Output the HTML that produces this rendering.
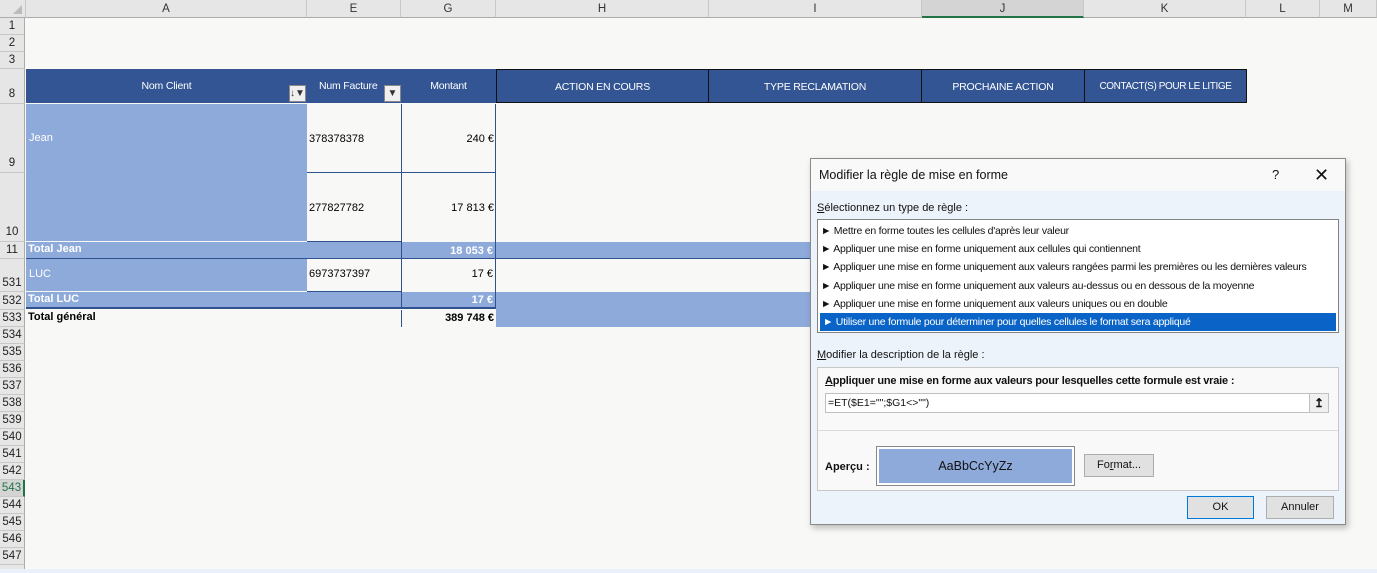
<!DOCTYPE html>
<html><head><meta charset="utf-8"><style>
*{margin:0;padding:0;box-sizing:border-box}
body{width:1377px;height:573px;overflow:hidden;background:#f8f8f6;font-family:"Liberation Sans",sans-serif;font-size:11px;color:#000;position:relative}
.a{position:absolute}
.ch{top:0;height:18px;background:#e6e6e6;border-right:1px solid #c8c8c8;border-bottom:1px solid #ababab;text-align:center;line-height:18px;font-size:11.5px;color:#333}
.rh{left:0;width:25px;background:#e6e6e6;border-bottom:1px solid #c8c8c8;border-right:1px solid #ababab;text-align:center;font-size:11.5px;color:#222}
.hd{top:69px;height:34px;background:#335593;color:#fff;text-align:center;line-height:34px;font-size:10.5px;letter-spacing:-0.2px}
.lb{background:#8eaadb}
.dlg{font-size:11px;color:#111}
.it{position:absolute;left:3px;height:18px;line-height:18px;width:516px;white-space:nowrap;overflow:hidden;font-size:10.5px;letter-spacing:-0.25px}
.btn{position:absolute;background:#e1e1e1;border:1px solid #adadad;text-align:center;font-size:11px}
</style></head><body>
<div class="a ch" style="left:0;width:26px"><div style="position:absolute;right:3px;bottom:3px;width:0;height:0;border-left:9px solid transparent;border-bottom:9px solid #bbb"></div></div>
<div class="a ch" style="left:26px;width:281px">A</div>
<div class="a ch" style="left:307px;width:94px">E</div>
<div class="a ch" style="left:401px;width:95px">G</div>
<div class="a ch" style="left:496px;width:213px">H</div>
<div class="a ch" style="left:709px;width:213px">I</div>
<div class="a ch" style="left:922px;width:162px;background:#d4d4d4;border-bottom:2px solid #217346">J</div>
<div class="a ch" style="left:1084px;width:162px">K</div>
<div class="a ch" style="left:1246px;width:74px">L</div>
<div class="a ch" style="left:1320px;width:57px">M</div>
<div class="a rh" style="top:18px;height:17px;line-height:17px">1</div>
<div class="a rh" style="top:35px;height:17px;line-height:17px">2</div>
<div class="a rh" style="top:52px;height:17px;line-height:17px">3</div>
<div class="a rh" style="top:69px;height:35px;line-height:50px">8</div>
<div class="a rh" style="top:104px;height:69px;line-height:118px">9</div>
<div class="a rh" style="top:173px;height:69px;line-height:118px">10</div>
<div class="a rh" style="top:242px;height:17px;line-height:17px">11</div>
<div class="a rh" style="top:259px;height:33px;line-height:48px">531</div>
<div class="a rh" style="top:292px;height:18px;line-height:18px">532</div>
<div class="a rh" style="top:310px;height:17px;line-height:17px">533</div>
<div class="a rh" style="top:327px;height:17px;line-height:17px">534</div>
<div class="a rh" style="top:344px;height:17px;line-height:17px">535</div>
<div class="a rh" style="top:361px;height:17px;line-height:17px">536</div>
<div class="a rh" style="top:378px;height:17px;line-height:17px">537</div>
<div class="a rh" style="top:395px;height:17px;line-height:17px">538</div>
<div class="a rh" style="top:412px;height:17px;line-height:17px">539</div>
<div class="a rh" style="top:429px;height:17px;line-height:17px">540</div>
<div class="a rh" style="top:446px;height:17px;line-height:17px">541</div>
<div class="a rh" style="top:463px;height:17px;line-height:17px">542</div>
<div class="a rh" style="top:480px;height:17px;line-height:17px;background:#d4d4d4;color:#217346;border-right:2px solid #217346">543</div>
<div class="a rh" style="top:497px;height:17px;line-height:17px">544</div>
<div class="a rh" style="top:514px;height:17px;line-height:17px">545</div>
<div class="a rh" style="top:531px;height:17px;line-height:17px">546</div>
<div class="a rh" style="top:548px;height:17px;line-height:17px">547</div>
<div class="a rh" style="top:565px;height:5px;line-height:17px;overflow:hidden"></div>
<div class="a" style="left:0;top:569px;width:1377px;height:4px;background:#eaf1fb"></div>
<div class="a hd" style="left:26px;width:281px">Nom Client</div>
<div class="a hd" style="left:307px;width:94px;text-align:left;padding-left:12px">Num Facture</div>
<div class="a hd" style="left:401px;width:95px">Montant</div>
<div class="a hd" style="left:496px;width:751px;border:1px solid #111"></div>
<div class="a hd" style="left:496px;width:213px;border:1px solid #111;background:#335593">ACTION EN COURS</div>
<div class="a hd" style="left:709px;width:213px;border:1px solid #111;background:#335593;border-left:0">TYPE RECLAMATION</div>
<div class="a hd" style="left:922px;width:162px;border-top:1px solid #111;border-bottom:1px solid #111;background:#335593">PROCHAINE ACTION</div>
<div class="a hd" style="left:1084px;width:163px;border:1px solid #111;background:#335593;font-size:10px;letter-spacing:-0.4px">CONTACT(S) POUR LE LITIGE</div>
<div class="a" style="left:289px;top:85px;width:17px;height:17px;background:#f0f0f0;border:1px solid #888;font-size:10px;line-height:15px;text-align:center;color:#333">&#8595;&#9660;</div>
<div class="a" style="left:384px;top:85px;width:17px;height:17px;background:#f0f0f0;border:1px solid #888;font-size:10px;line-height:15px;text-align:center;color:#333">&#9660;</div>
<div class="a lb" style="left:26px;top:104px;width:281px;height:137px;color:#fff;padding:28px 0 0 3px">Jean</div>
<div class="a" style="left:307px;top:104px;width:94px;height:138px;border-bottom:1px solid #2f528f"></div>
<div class="a" style="left:307px;top:172px;width:94px;border-top:1px solid #2f528f"></div>
<div class="a" style="left:309px;top:133px">378378378</div>
<div class="a" style="left:309px;top:202px">277827782</div>
<div class="a" style="left:401px;top:104px;width:95px;height:138px;border-left:1px solid #2f528f;border-right:1px solid #2f528f"></div>
<div class="a" style="left:401px;top:172px;width:95px;border-top:1px solid #2f528f"></div>
<div class="a" style="left:401px;top:133px;width:93px;text-align:right">240 €</div>
<div class="a" style="left:401px;top:202px;width:93px;text-align:right">17 813 €</div>
<div class="a lb" style="left:26px;top:242px;width:784px;height:17px;border-bottom:1px solid #2f528f"></div>
<div class="a" style="left:28px;top:243px;color:#fff;font-weight:bold">Total Jean</div>
<div class="a" style="left:401px;top:242px;width:95px;height:17px;border-left:1px solid #2f528f;border-right:1px solid #2f528f;color:#fff;font-weight:bold;text-align:right;padding-right:2px;line-height:18px">18 053 €</div>
<div class="a lb" style="left:26px;top:259px;width:281px;height:32px;color:#fff;padding:9px 0 0 3px">LUC</div>
<div class="a" style="left:307px;top:259px;width:94px;height:33px;border-bottom:1px solid #2f528f;padding:9px 0 0 2px">6973737397</div>
<div class="a" style="left:401px;top:259px;width:95px;height:33px;border-left:1px solid #2f528f;border-right:1px solid #2f528f;text-align:right;padding:9px 2px 0 0">17 €</div>
<div class="a lb" style="left:26px;top:292px;width:470px;height:17px;border-bottom:2px solid #2f528f"></div>
<div class="a lb" style="left:496px;top:292px;width:314px;height:35px"></div>
<div class="a" style="left:28px;top:293px;color:#fff;font-weight:bold">Total LUC</div>
<div class="a" style="left:401px;top:292px;width:95px;height:17px;border-left:1px solid #2f528f;border-right:1px solid #2f528f;color:#fff;font-weight:bold;text-align:right;padding:2px 2px 0 0">17 €</div>
<div class="a" style="left:28px;top:311px;font-weight:bold">Total général</div>
<div class="a" style="left:401px;top:310px;width:95px;height:17px;border-left:1px solid #2f528f;font-weight:bold;text-align:right;padding:2px 2px 0 0">389 748 €</div>
<div class="a dlg" style="left:810px;top:158px;width:536px;height:367px;background:#edf3fb;border:1px solid #8a8a8a;box-shadow:2px 3px 6px rgba(0,0,0,.25)">
 <div class="a" style="left:0;top:0;width:534px;height:32px;background:#f9f9f9;font-size:12.5px;line-height:32px;padding-left:8px">Modifier la règle de mise en forme
  <span class="a" style="left:461px;top:0;font-size:13px">?</span>
  <span class="a" style="left:503px;top:0;font-size:18px;font-weight:300">&#10005;</span></div>
 <div class="a" style="left:6px;top:43px"><u>S</u>électionnez un type de règle :</div>
 <div class="a" style="left:6px;top:60px;width:522px;height:114px;background:#fff;border:1px solid #828282">
  <div class="it" style="top:2px">► Mettre en forme toutes les cellules d'après leur valeur</div>
  <div class="it" style="top:20px">► Appliquer une mise en forme uniquement aux cellules qui contiennent</div>
  <div class="it" style="top:38px">► Appliquer une mise en forme uniquement aux valeurs rangées parmi les premières ou les dernières valeurs</div>
  <div class="it" style="top:57px">► Appliquer une mise en forme uniquement aux valeurs au-dessus ou en dessous de la moyenne</div>
  <div class="it" style="top:75px">► Appliquer une mise en forme uniquement aux valeurs uniques ou en double</div>
  <div class="it" style="top:93px;background:#0a64c8;color:#fff;padding-left:3px;left:2px;width:516px">► Utiliser une formule pour déterminer pour quelles cellules le format sera appliqué</div>
 </div>
 <div class="a" style="left:6px;top:190px"><u>M</u>odifier la description de la règle :</div>
 <div class="a" style="left:6px;top:208px;width:522px;height:124px;background:#f9f9f9;border:1px solid #c8c8c8">
  <div class="a" style="left:7px;top:7px;font-weight:bold;letter-spacing:-0.2px"><u>A</u>ppliquer une mise en forme aux valeurs pour lesquelles cette formule est vraie :</div>
  <div class="a" style="left:7px;top:25px;width:504px;height:20px;background:#fff;border:1px solid #c0c0c0;line-height:18px;padding-left:2px;font-size:10.5px">=ET($E1="";$G1&lt;&gt;"")
   <div class="a" style="right:0;top:0;width:19px;height:18px;border-left:1px solid #c0c0c0;background:#f0f0f0;text-align:center;font-weight:bold;font-size:12px">&#8613;</div></div>
  <div class="a" style="left:0;top:62px;width:520px;border-top:1px solid #dcdcdc"></div>
  <div class="a" style="left:7px;top:93px;font-weight:bold">Aperçu :</div>
  <div class="a" style="left:58px;top:78px;width:199px;height:40px;border:1px solid #888;background:#fff;padding:2px"><div style="width:100%;height:100%;background:#8eaadb;text-align:center;line-height:34px;font-size:12.5px">AaBbCcYyZz</div></div>
  <div class="btn" style="left:266px;top:86px;width:70px;height:23px;line-height:21px">Fo<u>r</u>mat...</div>
 </div>
 <div class="btn" style="left:376px;top:337px;width:67px;height:23px;line-height:21px;border:1px solid #0078d7">OK</div>
 <div class="btn" style="left:455px;top:337px;width:68px;height:23px;line-height:21px">Annuler</div>
</div>
</body></html>
